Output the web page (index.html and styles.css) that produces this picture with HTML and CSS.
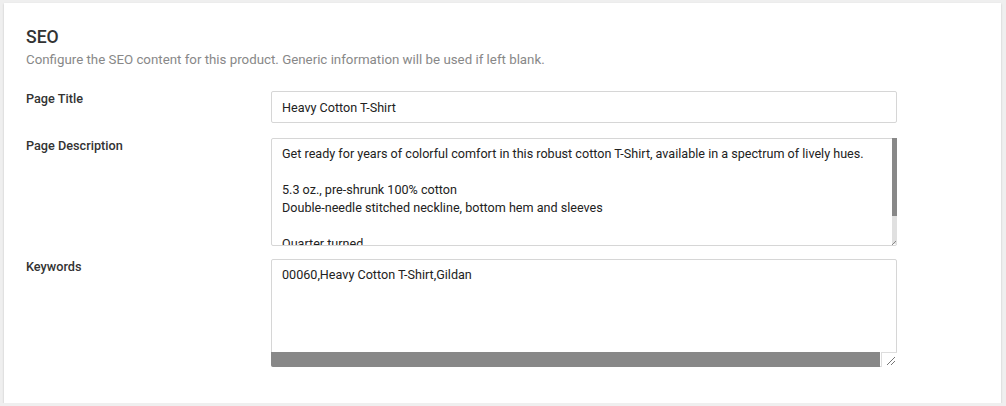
FILE: index.html
```html
<!DOCTYPE html>
<html>
<head>
<meta charset="utf-8">
<link rel="stylesheet" href="styles.css">
</head>
<body>
<div class="card">
  <h2 class="title">SEO</h2>
  <p class="subtitle">Configure the SEO content for this product. Generic information will be used if left blank.</p>
  <div class="row first">
    <label class="label">Page Title</label>
    <input class="field input" type="text" value="Heavy Cotton T-Shirt">
  </div>
  <div class="row">
    <label class="label">Page Description</label>
    <div class="wrap">
      <textarea class="field area desc">Get ready for years of colorful comfort in this robust cotton T-Shirt, available in a spectrum of lively hues.

5.3 oz., pre-shrunk 100% cotton
Double-needle stitched neckline, bottom hem and sleeves

Quarter turned
Seamless rib collar
Taped neck and shoulders</textarea>
      <div class="vbar"><div class="vthumb"></div></div>
      <div class="grip small"></div>
    </div>
  </div>
  <div class="row last">
    <label class="label">Keywords</label>
    <div class="wrap">
      <textarea class="field area kw">00060,Heavy Cotton T-Shirt,Gildan</textarea>
      <div class="hbar"></div>
      <div class="corner"><div class="grip"></div></div>
    </div>
  </div>
</div>
</body>
</html>
```
FILE: styles.css
```css
html, body {
  margin: 0;
  padding: 0;
  background: #efefef;
  font-family: Roboto, "Liberation Sans", Arial, sans-serif;
  color: #333;
}
body {
  padding: 3px 5px 0 4px;
}
.card {
  background: #fff;
  height: 400px;
  box-sizing: border-box;
  padding: 22px 104px 0 22px;
  box-shadow: 0 1px 2px rgba(0,0,0,0.18);
}
.title {
  margin: 0;
  font-size: 17.6px;
  font-weight: 500;
  line-height: 24px;
  color: #333;
}
.subtitle {
  margin: 2px 0 0;
  font-size: 13.3px;
  line-height: 18px;
  color: #888;
}
.row {
  display: flex;
  align-items: flex-start;
  margin-top: 15px;
}
.row.first { margin-top: 22px; }
.row.last { margin-top: 13px; }
.label {
  width: 245px;
  flex: none;
  font-size: 12.7px;
  font-weight: 500;
  color: #333;
  line-height: 18px;
  margin-top: -1px;
}
.wrap {
  flex: 1;
  position: relative;
  display: flex;
}
.field {
  flex: 1;
  box-sizing: border-box;
  border: 1px solid #d6d6d6;
  border-radius: 2px;
  font-family: Roboto, "Liberation Sans", Arial, sans-serif;
  font-size: 12.6px;
  color: #222;
  padding: 0 10px;
  margin: 0;
  outline: none;
  background: #fff;
}
.input {
  height: 32px;
}
.area {
  height: 108px;
  line-height: 18px;
  padding-top: 6px;
  resize: none;
  overflow: hidden;
}
.kw {
  white-space: pre;
}
.vbar {
  position: absolute;
  right: 0;
  top: 0;
  width: 5px;
  height: 106px;
  background: #e0e0e0;
}
.vthumb {
  height: 78px;
  background: #888;
}
.hbar {
  position: absolute;
  left: 0;
  bottom: 0;
  right: 17px;
  height: 15px;
  background: #888;
  border-bottom-left-radius: 2px;
}
.corner {
  position: absolute;
  right: 0;
  bottom: 0;
  width: 16px;
  height: 15px;
  box-sizing: border-box;
  border-left: 1px solid #ddd;
  border-top: 1px solid #ddd;
  background: #fff;
}
.grip {
  position: absolute;
  right: 2px;
  bottom: 2px;
  width: 8px;
  height: 8px;
  background:
    linear-gradient(135deg, transparent 45%, #777 45%, #777 55%, transparent 55%) 0 0 / 8px 8px no-repeat,
    linear-gradient(135deg, transparent 45%, #777 45%, #777 55%, transparent 55%) 4px 4px / 4px 4px no-repeat;
}
.grip.small {
  right: 1px;
  bottom: 1px;
  width: 4px;
  height: 4px;
  background:
    linear-gradient(135deg, transparent 45%, #888 45%, #888 60%, transparent 60%) 0 0 / 4px 4px no-repeat;
}
```
